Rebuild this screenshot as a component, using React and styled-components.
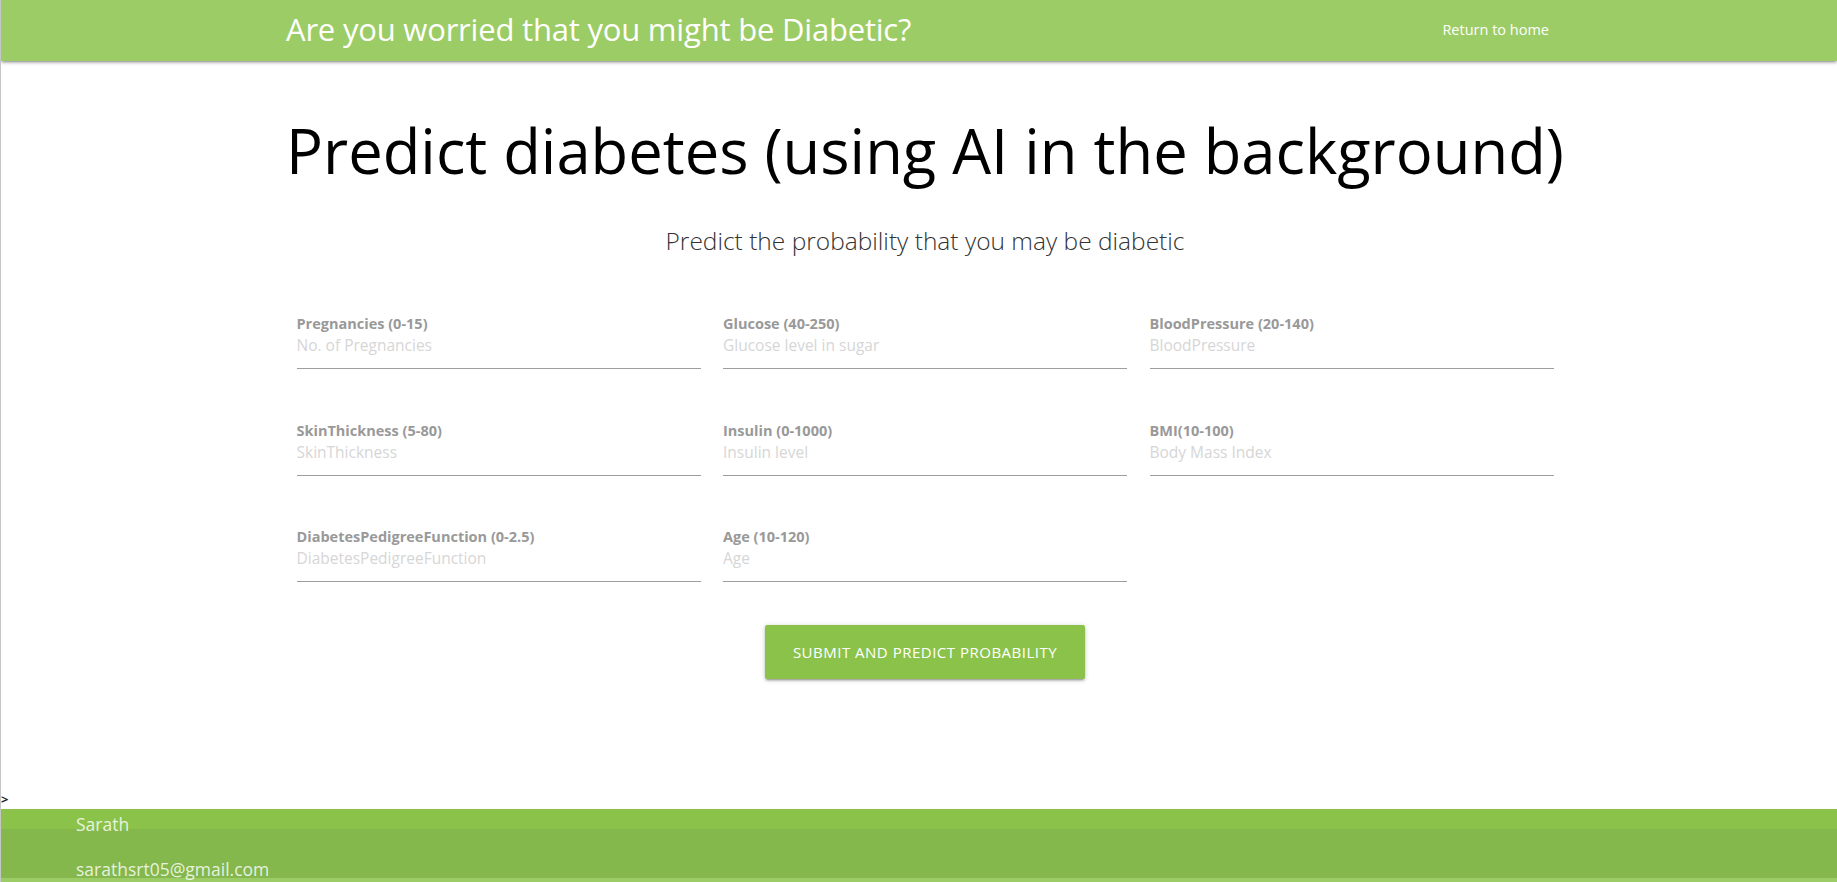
import React from "react";
import styled, { createGlobalStyle } from "styled-components";

const fields = [
  { label: "Pregnancies (0-15)", placeholder: "No. of Pregnancies" },
  { label: "Glucose (40-250)", placeholder: "Glucose level in sugar" },
  { label: "BloodPressure (20-140)", placeholder: "BloodPressure" },
  { label: "SkinThickness (5-80)", placeholder: "SkinThickness" },
  { label: "Insulin (0-1000)", placeholder: "Insulin level" },
  { label: "BMI(10-100)", placeholder: "Body Mass Index" },
  {
    label: "DiabetesPedigreeFunction (0-2.5)",
    placeholder: "DiabetesPedigreeFunction",
  },
  { label: "Age (10-120)", placeholder: "Age" },
];

const App = () => {
  return (
    <Page>
      <GlobalStyle />
      <Nav>
        <NavInner>
          <Brand>Are you worried that you might be Diabetic?</Brand>
          <NavLink href="#">Return to home</NavLink>
        </NavInner>
      </Nav>

      <Main>
        <Container>
          <Title>Predict diabetes (using AI in the background)</Title>
          <Subtitle>Predict the probability that you may be diabetic</Subtitle>

          <Form onSubmit={(e) => e.preventDefault()}>
            <Grid>
              {fields.map((f) => (
                <Field key={f.label}>
                  <Label>{f.label}</Label>
                  <Input type="text" placeholder={f.placeholder} />
                </Field>
              ))}
            </Grid>
            <SubmitButton type="submit">Submit and predict probability</SubmitButton>
          </Form>
        </Container>
      </Main>

      <Stray>&gt;</Stray>

      <Footer>
        <FooterLine>Sarath</FooterLine>
        <FooterLine $gap>sarathsrt05@gmail.com</FooterLine>
      </Footer>
    </Page>
  );
};

export default App;

// styles

const GlobalStyle = createGlobalStyle`
  body {
    margin: 0;
    background: #ffffff;
    font-family: "Open Sans", "Noto Sans", sans-serif;
  }
`;

const Page = styled.div`
  min-height: 100vh;
  border-left: 1px solid #c6c6c6;
  overflow: hidden;
`;

const Nav = styled.nav`
  height: 61px;
  background-color: #9ccc65;
  padding-left: 12px;
  box-shadow: 0 2px 2px 0 rgba(0, 0, 0, 0.14), 0 3px 1px -2px rgba(0, 0, 0, 0.12),
    0 1px 5px 0 rgba(0, 0, 0, 0.2);
`;

const NavInner = styled.div`
  width: 1286px;
  height: 100%;
  margin: 0 auto;
  display: flex;
  align-items: center;
  justify-content: space-between;
`;

const Brand = styled.div`
  padding-left: 4px;
  margin-top: -3px;
  color: #ffffff;
  font-size: 31px;
  line-height: 58px;
  letter-spacing: -0.2px;
`;

const NavLink = styled.a`
  padding: 0 19px 2px 15px;
  color: #ffffff;
  font-size: 14.5px;
  text-decoration: none;
`;

const Main = styled.main`
  padding-left: 12px;
`;

const Container = styled.div`
  width: 1286px;
  margin: 0 auto;
  display: flex;
  flex-direction: column;
  align-items: center;
`;

const Title = styled.h1`
  margin: 53px 0 0;
  color: #000000;
  font-size: 61.5px;
  font-weight: 400;
  line-height: 72px;
  text-align: center;
`;

const Subtitle = styled.h5`
  margin: 39px 0 0;
  color: #333333;
  font-size: 24.5px;
  font-weight: 300;
  line-height: 31px;
`;

const Form = styled.form`
  margin-top: 57px;
  display: flex;
  flex-direction: column;
  align-items: center;
`;

const Grid = styled.div`
  display: grid;
  grid-template-columns: repeat(3, 404px);
  column-gap: 22.5px;
  row-gap: 50.5px;
`;

const Field = styled.div`
  display: flex;
  flex-direction: column;
`;

const Label = styled.label`
  padding-top: 2px;
  color: #999999;
  font-size: 14.5px;
  font-weight: 700;
  line-height: 18px;
`;

const Input = styled.input`
  box-sizing: border-box;
  width: 100%;
  height: 36px;
  padding: 0 0 11px;
  border: none;
  border-bottom: 1px solid #9e9e9e;
  outline: none;
  background: transparent;
  font-family: inherit;
  font-size: 15.5px;
  color: #333333;

  &::placeholder {
    color: #d6d6d6;
  }
`;

const SubmitButton = styled.button`
  margin-top: 43px;
  height: 54px;
  padding: 0 28px;
  border: none;
  border-radius: 2px;
  background-color: #8bc34a;
  color: #ffffff;
  font-family: inherit;
  font-size: 15px;
  letter-spacing: 0.5px;
  text-transform: uppercase;
  cursor: pointer;
  box-shadow: 0 2px 2px 0 rgba(0, 0, 0, 0.14), 0 3px 1px -2px rgba(0, 0, 0, 0.12),
    0 1px 5px 0 rgba(0, 0, 0, 0.2);
`;

const Stray = styled.div`
  margin-top: 110px;
  color: #222222;
  font-size: 13px;
  font-weight: 700;
  line-height: 20px;
`;

const Footer = styled.footer`
  padding: 4px 0 20px 75px;
  background: linear-gradient(
    to bottom,
    #8bc34a 0,
    #8bc34a 19.5px,
    #84b84c 19.5px,
    #84b84c 69px,
    #9ccc65 69px
  );
`;

const FooterLine = styled.p`
  margin: ${(p) => (p.$gap ? "23px" : "0")} 0 0;
  color: rgba(255, 255, 255, 0.82);
  font-size: 17.5px;
  line-height: 22px;
`;
